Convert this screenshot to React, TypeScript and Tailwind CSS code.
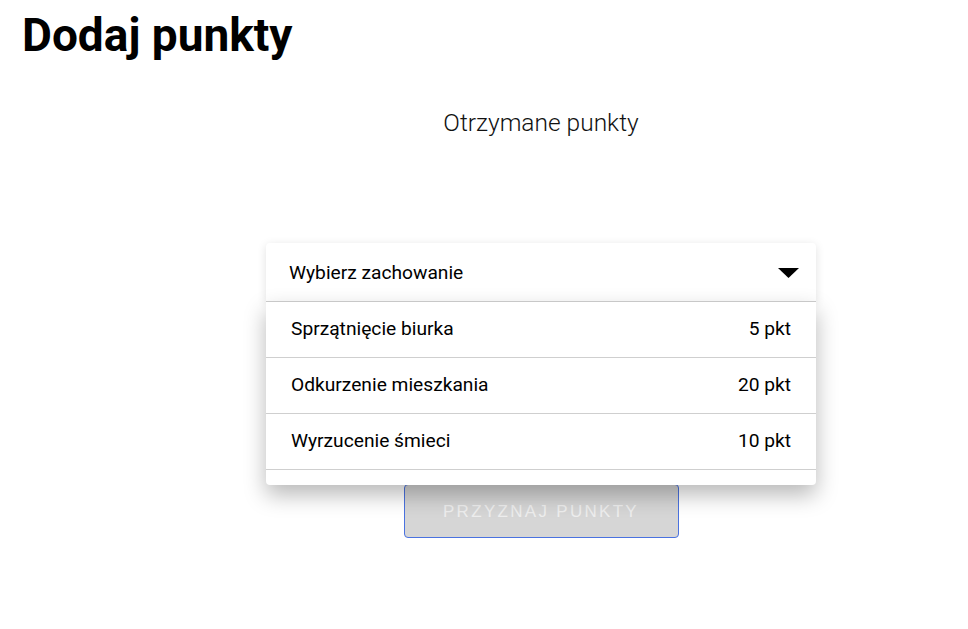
const options = [
  { name: 'Sprzątnięcie biurka', points: 5 },
  { name: 'Odkurzenie mieszkania', points: 20 },
  { name: 'Wyrzucenie śmieci', points: 10 },
]

export default function App() {
  return (
    <div className="min-h-screen bg-white pt-[7px] font-['Roboto',sans-serif] text-black">
      <h1 className="pl-[22px] text-[46px] font-bold leading-[56px]">Dodaj punkty</h1>
      <div className="flex flex-col items-center pl-[114px]">
        <p className="mt-[45px] text-[24.5px] font-light leading-[29px] text-[#111]">Otrzymane punkty</p>

        <div className="relative mt-[106px] w-[550px]">
          <div className="flex h-[59px] items-center justify-between rounded-t-[4px] bg-white pl-[23px] pr-[17px] shadow-[0_2px_10px_rgba(0,0,0,0.12)]">
            <span className="text-[19.2px] leading-none">Wybierz zachowanie</span>
            <svg width="21" height="10" viewBox="0 0 21 10">
              <path d="M0 0h21L10.5 10z" fill="#000" />
            </svg>
          </div>

          <ul className="absolute left-0 right-0 top-[58px] z-10 rounded-b-[4px] border-t border-[#c8c8c8] bg-white pb-[15px] shadow-[0_10px_22px_rgba(0,0,0,0.28)]">
            {options.map((o) => (
              <li
                key={o.name}
                className="flex h-[56px] items-center justify-between border-b border-[#cfcfcf] px-[25px] text-[19.2px]"
              >
                <span>{o.name}</span>
                <span>{o.points} pkt</span>
              </li>
            ))}
          </ul>
        </div>

        <button
          disabled
          className="mt-[182px] h-[54px] w-[275px] rounded-[4px] border border-[#4a72e0] bg-[#d6d6d6] pt-[2px] font-['Liberation_Sans',Arial,sans-serif] text-[17px] tracking-[2.3px] text-[#eeeeee]"
        >
          PRZYZNAJ PUNKTY
        </button>
      </div>
    </div>
  )
}
